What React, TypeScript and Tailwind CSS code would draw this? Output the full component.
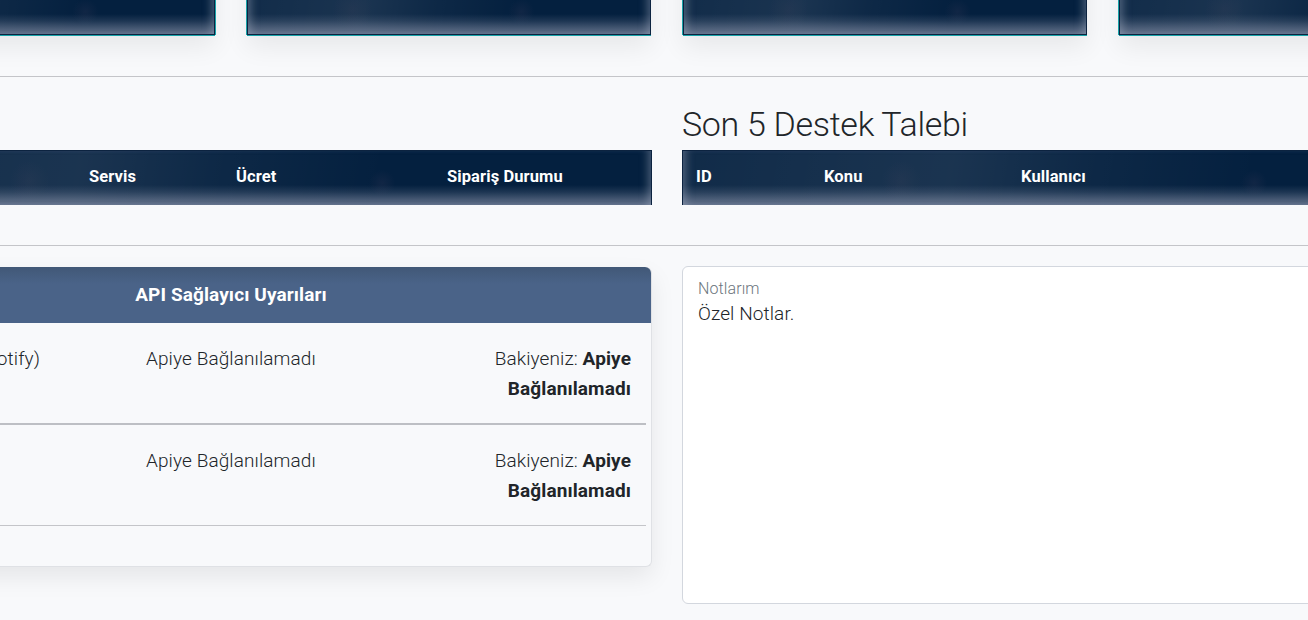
const band =
  "bg-[#04203f] bg-[linear-gradient(to_bottom,rgba(130,140,163,0)_calc(100%-20px),rgba(130,140,163,0.2)_calc(100%-13px),rgba(130,140,163,0.5)_calc(100%-6px),rgba(130,140,163,0.74)_100%),radial-gradient(circle_at_68%_calc(100%-22px),rgba(85,70,100,0.16)_0,rgba(85,70,100,0)_13px),radial-gradient(circle_at_26%_calc(100%-24px),rgba(90,80,100,0.12)_0,rgba(90,80,100,0)_20px),linear-gradient(100deg,rgba(255,255,255,0.05)_0%,rgba(255,255,255,0.08)_22%,rgba(255,255,255,0.09)_32%,rgba(255,255,255,0.04)_48%,rgba(255,255,255,0)_68%)] shadow-[inset_9px_0_8px_-6px_rgba(170,180,200,0.4),inset_-9px_0_8px_-6px_rgba(170,180,200,0.4)]";

function StatCard({ teal = "shadow-[-1px_0_0_#17a2a8,0_1px_0_#17a2a8,0_12px_24px_rgba(0,0,0,0.07)]" }: { teal?: string }) {
  return (
    <div className="px-4">
      <div className={`h-[135px] ${teal}`}>
        <div className={`h-full border border-[#0c2340] ${band}`} />
      </div>
    </div>
  );
}

function TableHead({ cols }: { cols: { label: string; w: string }[] }) {
  return (
    <div className={`flex h-[55px] items-center border-x border-t border-[#0c2340] pb-[3px] pl-[13px] text-[16.5px] font-bold text-white ${band}`}>
      {cols.map((c) => (
        <span key={c.label} className={c.w}>
          {c.label}
        </span>
      ))}
    </div>
  );
}

function ApiRow({ name, border }: { name: string; border: string }) {
  return (
    <div className={`grid grid-cols-[316px_200px_315px] pt-[21px] pb-[19px] ${border}`}>
      <div className="pr-[91px] text-right whitespace-nowrap">{name}</div>
      <div className="pl-[15px] whitespace-nowrap">Apiye Bağlanılamadı</div>
      <div className="pr-[15px] text-right">
        Bakiyeniz: <b className="font-bold">Apiye</b>
        <br />
        <b className="font-bold">Bağlanılamadı</b>
      </div>
    </div>
  );
}

export default function App() {
  return (
    <div className="h-[620px] overflow-hidden bg-[#f8f9fb] font-['Roboto',sans-serif] text-[19px] leading-[30px] font-light tracking-[0.1px] text-[#212529]">
      <div className="-ml-[205px] w-[1744px]">
        <div className="-mt-[100px] grid grid-cols-4">
          <StatCard teal="shadow-[-1px_0_0_#17a2a8,0_1px_0_#17a2a8,1px_0_0_#17a2a8,0_12px_24px_rgba(0,0,0,0.07)]" />
          <StatCard />
          <StatCard />
          <StatCard />
        </div>
        <hr className="mt-[41px] border-0 border-t border-[#c4c5c9]" />

        <div className="grid grid-cols-2 gap-[30px] px-[15px]">
          <div>
            <div className="h-[73px]" />
            <TableHead
              cols={[
                { label: "ID", w: "w-[100px]" },
                { label: "Kullanıcı", w: "w-[165px]" },
                { label: "Servis", w: "w-[147px]" },
                { label: "Ücret", w: "w-[211px]" },
                { label: "Sipariş Durumu", w: "w-[150px]" },
              ]}
            />
          </div>
          <div>
            <h2 className="h-[73px] pt-[27px] text-[34px] leading-[40px] font-light tracking-[-0.3px]">Son 5 Destek Talebi</h2>
            <TableHead
              cols={[
                { label: "ID", w: "w-[128px]" },
                { label: "Konu", w: "w-[197px]" },
                { label: "Kullanıcı", w: "w-[150px]" },
              ]}
            />
          </div>
        </div>
        <hr className="mt-10 border-0 border-t border-[#c4c5c9]" />

        <div className="mt-5 grid grid-cols-2 gap-[30px] px-[15px]">
          <div className="mt-px h-[300px] rounded-md border border-t-0 border-[#dfe1e5] bg-[#f8f9fb] shadow-[0_10px_25px_rgba(0,0,0,0.08)]">
            <div className="grid h-[56px] grid-cols-[320px_200px] items-center rounded-t-md bg-[#486083] bg-[linear-gradient(to_bottom,#415877,#4a6388_30%)] font-bold text-white">
              <span />
              <span className="text-center whitespace-nowrap">API Sağlayıcı Uyarıları</span>
            </div>
            <div className="pr-[5px] pl-[4px]">
              <ApiRow name="Spotify Takipçi (Spotify)" border="border-b-2 border-[#bdbfc4]" />
              <ApiRow name="" border="border-b border-[#c4c5c9]" />
            </div>
          </div>
          <div className="h-[338px] rounded-md border border-[#d3d7de] bg-white px-[15px] pt-[8px]">
            <div className="text-[16px] leading-[28px] text-[#6c757d]">Notlarım</div>
            <div className="-mt-[2px] leading-[25px]">Özel Notlar.</div>
          </div>
        </div>
      </div>
    </div>
  );
}
